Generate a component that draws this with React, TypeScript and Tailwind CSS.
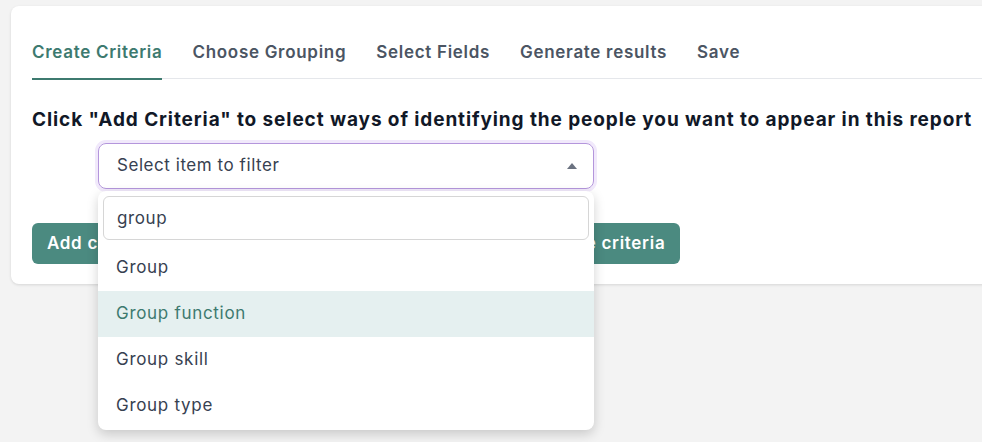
import React, { useState } from 'react';

const TABS = ['Create Criteria', 'Choose Grouping', 'Select Fields', 'Generate results', 'Save'];
const OPTIONS = ['Group', 'Group function', 'Group skill', 'Group type'];

const App: React.FC = () => {
  const [active] = useState(0);
  const [query, setQuery] = useState('group');
  const hovered = 1;

  return (
    <div className="min-h-screen overflow-hidden bg-[#f3f3f3] pt-[6px] pl-[11px] font-['Inter',sans-serif]">
      <div className="-mr-6 rounded-lg bg-white pt-[34px] pb-[20px] pl-[21px] shadow-[0_1px_3px_rgba(0,0,0,0.12)]">
        {/* tabs */}
        <div className="flex gap-[30px] border-b border-[#e5e7eb]">
          {TABS.map((tab, i) => (
            <div
              key={tab}
              className={`-mb-[2px] border-b-2 pb-[14px] text-[17px] leading-6 font-semibold tracking-[0.7px] ${
                i === active ? 'border-[#3d7a6f] text-[#3d7a6f]' : 'border-transparent text-[#4b5563]'
              }`}
            >
              {tab}
            </div>
          ))}
        </div>

        <h2 className="mt-[27px] text-[19px] leading-7 font-bold tracking-[0.9px] text-[#111827]">
          Click "Add Criteria" to select ways of identifying the people you want to appear in this report
        </h2>

        {/* select + dropdown */}
        <div className="relative mt-[9px] ml-[66px] w-[496px]">
          <div className="flex h-[46px] items-center justify-between rounded-lg border border-[#b496dc] pr-[16px] pl-[18px] ring-[3px] ring-[#f1e9fb]">
            <span className="text-[17px] tracking-[0.55px] text-[#374151]">Select item to filter</span>
            <svg width="10" height="6" viewBox="0 0 10 6" className="mt-[-1px]">
              <path d="M5 0 L10 6 L0 6 Z" fill="#6b7280" />
            </svg>
          </div>

          <div className="absolute top-[48px] left-0 z-10 w-full rounded-lg bg-white pt-[5px] pb-[1px] shadow-[0_4px_12px_rgba(0,0,0,0.18)]">
            <div className="px-[5px]">
              <input
                value={query}
                onChange={(e) => setQuery(e.target.value)}
                className="h-[44px] w-full rounded-md border border-[#d6d6d6] px-[13px] text-[17px] tracking-[0.6px] text-[#374151] outline-none"
              />
            </div>
            <ul className="mt-[5px]">
              {OPTIONS.map((opt, i) => (
                <li
                  key={opt}
                  className={`flex h-[46px] items-center pl-[18px] text-[17px] tracking-[0.7px] ${
                    i === hovered ? 'bg-[#e5f0f0] text-[#3d7a6f]' : 'text-[#374151]'
                  }`}
                >
                  {opt}
                </li>
              ))}
            </ul>
          </div>
        </div>

        {/* actions */}
        <div className="mt-[34px] flex gap-[14px]">
          <button className="h-[41px] rounded-md bg-[#4b8a80] px-[15px] text-[17px] font-semibold tracking-[0.7px] text-white">
            Add criteria
          </button>
          <button className="ml-[331px] h-[41px] rounded-md bg-[#4b8a80] px-[15px] text-[17px] font-semibold tracking-[0.7px] text-white">
            Remove criteria
          </button>
        </div>
      </div>
    </div>
  );
};

export default App;
